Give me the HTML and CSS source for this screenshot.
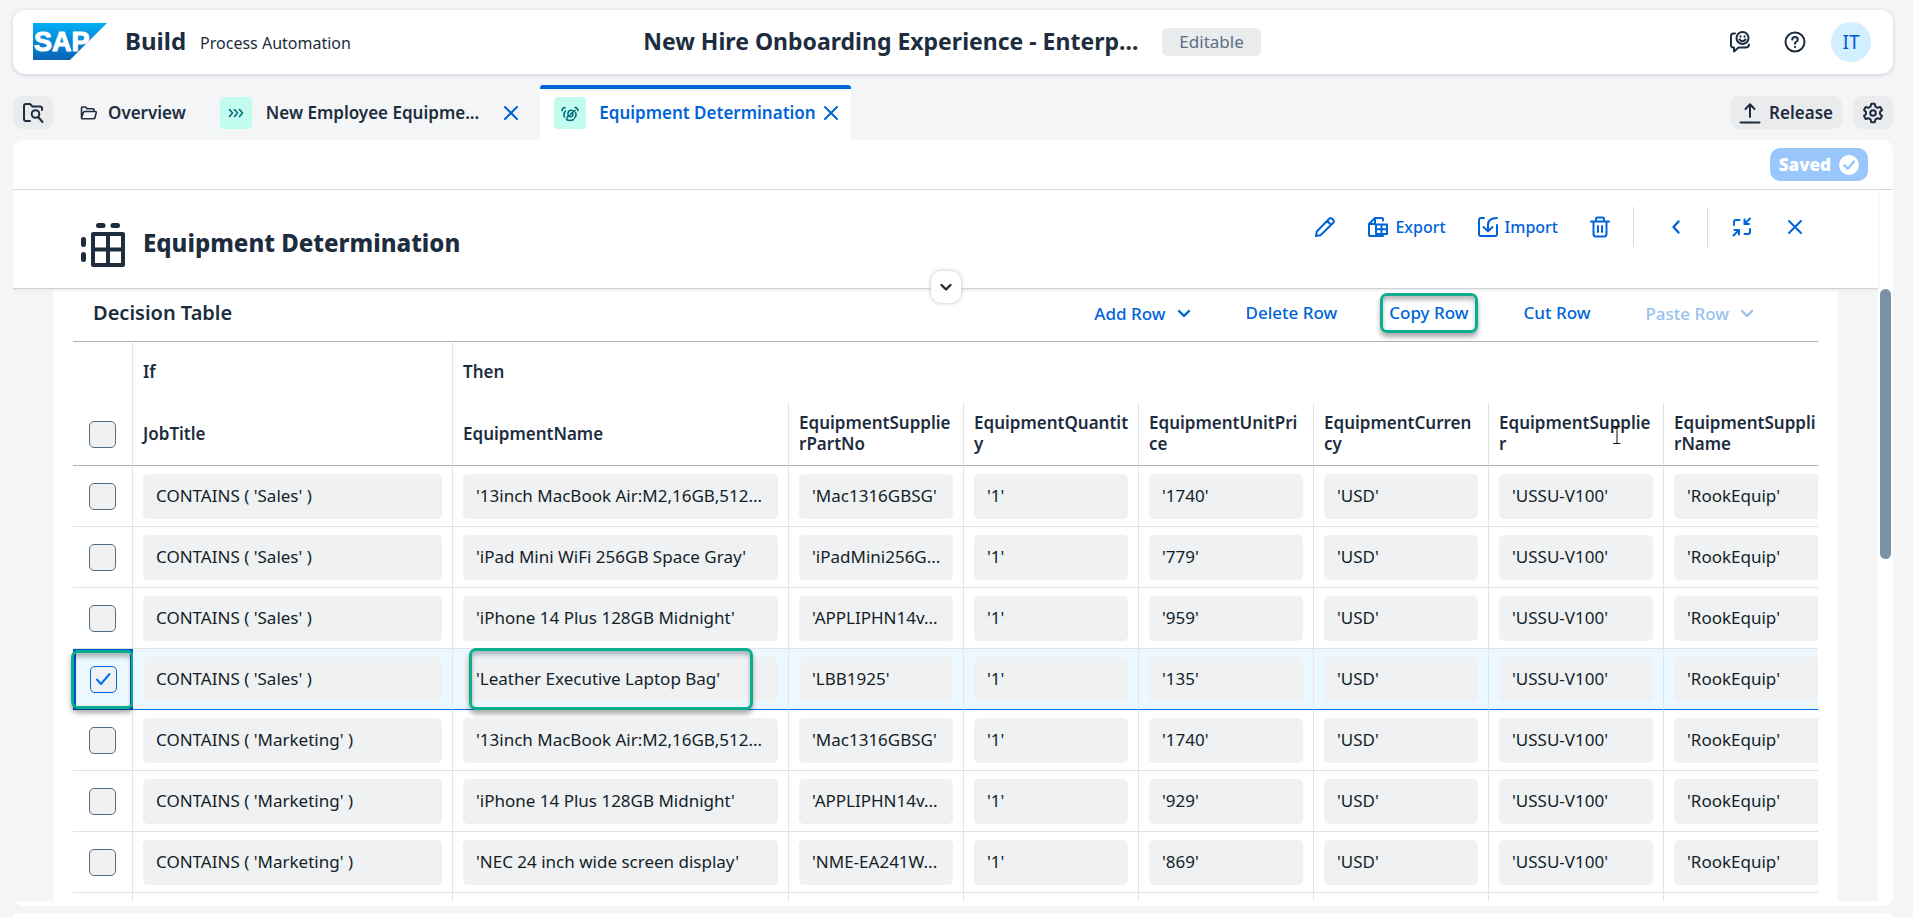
FILE: index.html
```html
<!DOCTYPE html>
<html lang="en">
<head>
<meta charset="utf-8">
<title>SAP Build - Equipment Determination</title>
<link rel="stylesheet" href="styles.css">
</head>
<body>
<header class="shell">
  <div class="brand">
    <svg class="logo" viewBox="0 0 74 37" role="img" aria-label="SAP">
      <defs><linearGradient id="sap" x1="0" y1="0" x2="0" y2="1"><stop offset="0" stop-color="#00aef4"/><stop offset="1" stop-color="#0a62b5"/></linearGradient></defs>
      <path d="M0 0H74L37 37H0Z" fill="url(#sap)"/>
      <text x="1" y="28" class="logo-text">SAP</text>
    </svg>
    <strong class="product">Build</strong>
    <span class="module">Process Automation</span>
  </div>
  <div class="project">
    <h1 class="project-name">New Hire Onboarding Experience - Enterp...</h1>
    <span class="status">Editable</span>
  </div>
  <div class="shell-actions">
    <button class="icon-btn" aria-label="Feedback">
      <svg class="i22" viewBox="0 0 22 22"><path d="M6 2.500H4.500Q2 2.500 2 5V14Q2 16.500 4.500 16.500H5V20.500L9.500 16.500H16.500Q20 16.500 20 13.500"/><circle cx="13.500" cy="7" r="6"/><path d="M10.500 8.500Q13.500 12 16.500 8.500M11.500 5.200V5.700M15.500 5.200V5.700"/></svg>
    </button>
    <button class="icon-btn" aria-label="Help">
      <svg class="i22" viewBox="0 0 22 22"><circle cx="11" cy="11" r="9.500"/><path d="M8.200 8.500Q8.300 5.900 11 5.900T13.800 8.400Q13.800 10 12 11Q11 11.600 11 12.800M11 15.800V16.300"/></svg>
    </button>
    <button class="avatar">IT</button>
  </div>
</header>

<nav class="tabs">
  <button class="tool-btn square" aria-label="Browse project">
    <svg class="i22" viewBox="0 0 22 22"><path d="M8 19H4Q2 19 2 17V4Q2 2 4 2H8L10.500 4.500H18Q20 4.500 20 6.500V8"/><circle cx="13.500" cy="12" r="3.800"/><path d="M16.200 15L20.500 20"/></svg>
  </button>
  <button class="tab">
    <svg class="i18 thin" viewBox="0 0 18 18"><path d="M1.500 14V4Q1.500 3 2.500 3H5.500L7 4.800H13Q14 4.800 14 6V7.500M1.500 14L3.300 8.500Q3.700 7.500 4.700 7.500H15Q16.500 7.500 16.200 8.800L15 13.500Q14.700 14.800 13.500 14.800H2.500Q1.500 14.800 1.500 14Z"/></svg>
    <span>Overview</span>
  </button>
  <div class="tab">
    <span class="tab-icon"><svg class="i18 thin" viewBox="0 0 18 18"><path d="M2.500 5.500L5.500 9L2.500 12.500M7.500 5.500L10.500 9L7.500 12.500M12.500 5.500L15.500 9L12.500 12.500"/></svg></span>
    <button class="tab-label">New Employee Equipme...</button>
    <button class="close" aria-label="Close New Employee Equipment tab"><svg class="i18" viewBox="0 0 18 18"><path d="M3 3L15 15M15 3L3 15"/></svg></button>
  </div>
  <div class="tab active">
    <span class="tab-icon"><svg class="i18 thin" viewBox="0 0 18 18"><path d="M4.500 7Q2 10 3.500 13M5.500 15.500Q9 17.500 12.500 15.500M13.500 14Q16 11.500 14.500 8.500M12.500 7Q10 5.500 8 7Q6.200 9 7.500 11.500Q9.500 13.500 11.500 11.800Q12.500 10 11 9Q9.500 9 9.500 10.500M11 9L14 6.500M7.500 11.500L6 14M1 6.500Q1.500 3.800 4 3.500M17 6.500Q16.500 3.800 14 3.500"/></svg></span>
    <button class="tab-label">Equipment Determination</button>
    <button class="close" aria-label="Close Equipment Determination tab"><svg class="i18" viewBox="0 0 18 18"><path d="M3 3L15 15M15 3L3 15"/></svg></button>
  </div>
  <div class="tabs-end">
    <button class="tool-btn">
      <svg class="i22" viewBox="0 0 22 22"><path d="M11 15V2.500M6.500 7L11 2.300L15.500 7M1.500 20.500H20.500"/></svg>
      <span>Release</span>
    </button>
    <button class="tool-btn square" aria-label="Settings">
      <svg class="i22" viewBox="0 0 22 22"><path d="M9.300 1.800H12.700L13.500 4.700L15.500 5.800L18.300 5L20 8L18 10V12L20 14L18.300 17L15.500 16.200L13.500 17.300L12.700 20.200H9.300L8.500 17.300L6.500 16.200L3.700 17L2 14L4 12V10L2 8L3.700 5L6.500 5.800L8.500 4.700Z"/><circle cx="11" cy="11" r="2.800"/></svg>
    </button>
  </div>
</nav>

<main class="panel">
  <div class="savebar">
    <button class="saved">Saved
      <svg class="i20" viewBox="0 0 20 20"><circle cx="10" cy="10" r="10" class="fill-white"/><path d="M5.500 10.500L8.800 13.800L15 6.500" class="tick"/></svg>
    </button>
  </div>
  <section class="page-head">
    <svg class="page-icon" viewBox="0 0 46 46"><path d="M18.500 3.500H23M33 3.500H37.500M3.500 17.500V22.500M3.500 32.500V37.500" class="dash"/><path d="M13 12H43V43H13ZM28 12V43M13 27.500H43"/></svg>
    <h2 class="page-title">Equipment Determination</h2>
    <div class="page-actions">
      <button class="action file" aria-label="Edit"><svg class="i22" viewBox="0 0 22 22"><path d="M2 20L2.800 15.500L15.500 2.500Q16.500 1.500 17.800 2.500L19.500 4.200Q20.500 5.500 19.500 6.500L6.500 19.200ZM13.300 5L17 8.700"/></svg></button>
      <button class="action file"><svg class="i22" viewBox="0 0 22 22"><path d="M16 4.500V3Q16 2 15 2H8L2 8V19Q2 20 3 20H16M8 2V8H2M9 8.500H20V18H9ZM14.500 8.500V18M9 13.200H20"/></svg><span>Export</span></button>
      <button class="action file"><svg class="i22" viewBox="0 0 22 22"><path d="M7 2H4Q2 2 2 4V18Q2 20 4 20H18Q20 20 20 18V9M20 2Q11 2 11 9V15M6.500 11L11 15.200L15.500 11"/></svg><span>Import</span></button>
      <button class="action file" aria-label="Delete"><svg class="i22" viewBox="0 0 22 22"><path d="M2 5.500H20M7 5.500V3Q7 1.500 8.500 1.500H13.500Q15 1.500 15 3V5.500M4.500 5.500V18Q4.500 20.500 7 20.500H15Q17.500 20.500 17.500 18V5.500M9 10V16M13 10V16"/></svg></button>
      <span class="divider"></span>
      <button class="action" aria-label="Previous"><svg class="i18" viewBox="0 0 18 18"><path d="M11.500 3.500L6.500 9L11.500 14.500" class="bold"/></svg></button>
      <span class="divider"></span>
      <button class="action near" aria-label="Exit full screen"><svg class="i22" viewBox="0 0 22 22"><path d="M13.500 3.500V8H18M13.500 8L19 2.500M8 18.500V14H3.500M8 14L2.500 19.500M3 9V6Q3 4 5 4H8.500M19 13V16Q19 18 17 18H13.500"/></svg></button>
      <button class="action" aria-label="Close"><svg class="i18" viewBox="0 0 18 18"><path d="M3 3L15 15M15 3L3 15"/></svg></button>
    </div>
    <button class="expand" aria-label="Expand header"><svg class="i18" viewBox="0 0 18 18"><path d="M4.500 7L9 11.500L13.500 7" class="bold"/></svg></button>
  </section>
  <section class="body">
    <div class="card">
      <div class="toolbar">
        <h3 class="table-title">Decision Table</h3>
        <div class="row-actions">
          <button class="link has-menu">Add Row <svg class="i18" viewBox="0 0 18 18"><path d="M4 6L9 11L14 6" class="bold"/></svg></button>
          <button class="link">Delete Row</button>
          <button class="link marked">Copy Row</button>
          <button class="link">Cut Row</button>
          <button class="link has-menu" disabled>Paste Row <svg class="i18" viewBox="0 0 18 18"><path d="M4 6L9 11L14 6" class="bold"/></svg></button>
        </div>
      </div>
      <div class="table-wrap">
        <table class="rules">
          <colgroup><col class="c-check"><col class="c-job"><col class="c-name"><col><col><col><col><col><col></colgroup>
          <thead>
            <tr class="groups"><th></th><th>If</th><th colspan="7">Then</th></tr>
            <tr class="fields">
              <th><input type="checkbox" aria-label="Select all rows"></th>
              <th>JobTitle</th><th>EquipmentName</th><th>EquipmentSupplie<br>rPartNo</th><th>EquipmentQuantit<br>y</th><th>EquipmentUnitPri<br>ce</th><th>EquipmentCurren<br>cy</th>
              <th>EquipmentSupplie<br>r<svg class="ibeam" viewBox="0 0 8 20"><path d="M0.500 1.500H7M4 1.500V18.500M0.500 18.500H7"/></svg></th><th>EquipmentSuppli<br>rName</th>
            </tr>
          </thead>
          <tbody id="rows"></tbody>
        </table>
      </div>
    </div>
    <div class="thumb"></div>
  </section>
</main>
<div class="panel-next"></div>
<script src="rows.js"></script>
</body>
</html>
```

FILE: styles.css
```css
* { box-sizing: border-box; }
html, body { height: 100%; }
body {
  margin: 0;
  padding: 10px 20px 0 13px;
  display: flex;
  flex-direction: column;
  overflow: hidden;
  background: #f4f5f7;
  color: #1d2d3e;
  font-family: "Noto Sans", "Open Sans", sans-serif;
  font-size: 17px;
  line-height: 22px;
}
button { margin: 0; padding: 0; border: 0; background: none; font: inherit; color: inherit; white-space: nowrap; }
h1, h2, h3 { margin: 0; }
svg { display: block; flex: none; fill: none; stroke: currentColor; stroke-width: 2; stroke-linejoin: round; stroke-linecap: round; }
.i18 { width: 18px; height: 18px; }
.i20 { width: 20px; height: 20px; }
.i22 { width: 22px; height: 22px; }
.bold { stroke-width: 2.400; }
.thin { stroke-width: 1.600; }

.shell {
  flex: none;
  display: grid;
  grid-template-columns: 1fr auto 1fr;
  align-items: center;
  height: 64px;
  padding: 0 22px 2px 20px;
  background: #fff;
  border-radius: 12px;
  box-shadow: 0 1px 4px #c9ccd4;
}
.brand, .project, .shell-actions { display: flex; align-items: center; }
.logo { width: 74px; height: 37px; margin-top: 1px; stroke: none; overflow: visible; }
.logo-text { font: bold 27px "Liberation Sans", sans-serif; fill: #fff; stroke: #fff; stroke-width: 1; }
.product { margin: 0 14px 0 18px; font-size: 24px; }
.module { padding-top: 3px; font-size: 16px; }
.project { gap: 24px; }
.project-name { font-size: 23px; line-height: 30px; }
.status { margin-top: 2px; padding: 3px 17px; border-radius: 5px; background: #eaebed; color: #5b6f84; }
.shell-actions { justify-content: flex-end; gap: 33px; padding-top: 2px; }
.avatar { width: 40px; height: 40px; margin-left: -8px; border-radius: 50%; background: #d1efff; color: #0057d2; font-size: 19px; }

.tabs { flex: none; display: flex; align-items: center; height: 56px; margin-top: 10px; padding-top: 1px; font-weight: 600; }
.tool-btn { display: flex; align-items: center; gap: 8px; height: 33px; padding: 0 9px; border-radius: 9px; background: #eaebed; }
.square { width: 40px; }
.tab { display: flex; align-items: center; height: 55px; padding: 0 20px 0 27px; gap: 10px; }
.tab + .tab { padding-left: 14px; }
.tab .tab-label { margin: 0 13px 0 4px; }
.tab-icon { display: grid; place-items: center; width: 32px; height: 32px; border-radius: 4px; background: #c2fcee; color: #046c7a; }
.close { color: #0064d9; }
.tab.active { gap: 6px; padding: 0 11px 4px 14px; background: #fff; color: #0064d9; border-top: 4px solid #0064d9; border-radius: 3px 3px 0 0; }
.tab.active .tab-label { margin: 0 0 0 7px; }
.tabs-end { display: flex; gap: 11px; margin-left: auto; }

.panel { flex: 1; min-height: 0; display: flex; flex-direction: column; overflow: hidden; padding-bottom: 5px; border-radius: 10px; background: #fff; }
.savebar { flex: none; display: flex; justify-content: flex-end; align-items: center; height: 50px; padding: 0 25px; border-bottom: 1px solid #d9d9d9; }
.saved { display: flex; align-items: center; gap: 8px; height: 33px; padding: 0 9px; border-radius: 10px; background: #99c6fb; color: #fff; font-weight: 900; }
.fill-white { fill: #fff; stroke: none; }
.tick { stroke: #99c6fb; stroke-width: 2.500; }
.page-head { flex: none; position: relative; z-index: 1; display: flex; align-items: flex-start; height: 99px; margin-right: 15px; padding: 32px 74px 0 67px; border-bottom: 1px solid #d0d3d6; box-shadow: 0 1px 3px #e4e6e8; }
.page-icon { width: 46px; height: 46px; margin-right: 17px; stroke-width: 4; }
.dash { stroke-width: 5; }
.page-title { padding-top: 6px; font-size: 24px; line-height: 30px; font-weight: 800; }
.page-actions { display: flex; align-items: center; margin: -15px 0 0 auto; color: #0064d9; font-size: 16px; font-weight: 500; }
.action { display: flex; align-items: center; gap: 6px; height: 40px; margin-left: 33px; }
.action.file { margin-left: 31px; }
.action.near { margin-left: 23px; }
.divider { width: 1px; height: 40px; margin-left: 22px; background: #d9d9d9; }
.expand { position: absolute; left: 50%; bottom: -15px; display: grid; place-items: center; width: 30px; height: 32px; margin-left: -15px; border-radius: 10px; background: #fff; box-shadow: 0 0 4px #b9bfc6; }

.body { flex: 1; min-height: 0; position: relative; display: flex; margin-right: 15px; padding: 0 40px; background: #f4f5f7; }
.card { flex: 1; min-width: 0; display: flex; flex-direction: column; padding: 0 20px; background: #fff; }
.toolbar { flex: none; display: flex; align-items: center; justify-content: space-between; height: 52px; padding: 0 62px 4px 20px; }
.table-title { font-size: 20px; font-weight: 600; }
.row-actions { display: flex; align-items: center; gap: 43px; color: #0064d9; font-weight: 500; }
.link { height: 40px; }
.has-menu { display: flex; align-items: center; gap: 9px; padding-top: 2px; margin-right: 10px; }
.link:disabled { margin: 0 0 0 12px; color: #99c1f0; }
.marked, .ring { border: 3px solid #0bae8c; border-radius: 7px; box-shadow: 0 4px 5px #00000055, inset 0 4px 4px #00000044; }
.marked { padding: 0 6px; margin: 0 3px 0 0; }
.thumb { position: absolute; right: -13px; top: 0; width: 11px; height: 270px; border-radius: 6px; background: #7b91a8; }

.table-wrap { flex: 1; min-height: 0; overflow: hidden; margin-left: -6px; padding-left: 6px; }
.rules { width: 1766px; table-layout: fixed; border-spacing: 0; }
.c-check { width: 60px; }
.c-job { width: 320px; }
.c-name { width: 336px; }
th, td { position: relative; height: 61px; padding: 0 10px; border-right: 1px solid #e3e4e6; border-bottom: 1px solid #e0e1e3; text-align: left; line-height: 21px; }
th { padding-bottom: 2px; font-weight: 600; }
.groups th { height: 62px; border-top: 1px solid #a8b3bf; border-bottom: 0; }
.fields th { height: 63px; border-bottom-color: #a8b3bf; }
th:first-child, td:first-child { padding: 0; text-align: center; }
input[type="checkbox"] { appearance: none; display: block; width: 27px; height: 27px; margin: 0 auto; border: 1px solid #556b82; border-radius: 5px; background: #eff1f2; }
.selected td { background: #ebf8ff; border-bottom-color: #0070f2; }
.selected td:first-child { border: 3px solid #0057d2; }
.selected input[type="checkbox"] { border-color: #0064d9; }
.check { position: absolute; left: 17px; top: 17px; width: 20px; height: 20px; color: #0070f2; }
.value { height: 45px; padding: 0 8px 0 13px; overflow: hidden; border-radius: 5px; background: #eff1f2; color: #131e29; line-height: 43px; white-space: nowrap; text-overflow: ellipsis; }
.ring { position: absolute; pointer-events: none; }
.ring-check { left: -5px; top: -2px; width: 63px; height: 59px; }
.ring-name { left: 16px; top: -1px; width: 284px; height: 62px; }
.ibeam { position: absolute; left: 124px; top: 22px; width: 8px; height: 20px; color: #111; stroke-width: 1; }

.panel-next { flex: none; height: 4px; margin-top: 7px; border-radius: 8px 8px 0 0; background: #fff; }
```

FILE: rows.js
```js
const data = [
  ["Sales", "13inch MacBook Air:M2,16GB,512...", "Mac1316GBSG", "1740"],
  ["Sales", "iPad Mini WiFi 256GB Space Gray", "iPadMini256G...", "779"],
  ["Sales", "iPhone 14 Plus 128GB Midnight", "APPLIPHN14v...", "959"],
  ["Sales", "Leather Executive Laptop Bag", "LBB1925", "135"],
  ["Marketing", "13inch MacBook Air:M2,16GB,512...", "Mac1316GBSG", "1740"],
  ["Marketing", "iPhone 14 Plus 128GB Midnight", "APPLIPHN14v...", "929"],
  ["Marketing", "NEC 24 inch wide screen display", "NME-EA241W...", "869"]
];
const quote = text => text.endsWith("...") ? `'${text}` : `'${text}'`;
document.getElementById("rows").innerHTML = data.map(([job, name, part, price], i) => {
  const on = i === 3;
  const cells = [`CONTAINS ( '${job}' )`, quote(name), quote(part), "'1'", `'${price}'`, "'USD'", "'USSU-V100'", "'RookEquip'"];
  return `<tr class="${on ? "selected" : ""}"><td><input type="checkbox" aria-label="Select row ${i + 1}" ${on ? "checked" : ""}>` +
    (on ? '<svg class="check" viewBox="0 0 20 20"><path d="M4 10.500L8 15L16.500 5"/></svg><span class="ring ring-check"></span>' : "") + "</td>" +
    cells.map((c, k) => `<td><div class="value">${c}</div>${on && k === 1 ? '<span class="ring ring-name"></span>' : ""}</td>`).join("") + "</tr>";
}).join("") + `<tr>${"<td></td>".repeat(9)}</tr>`;
```
